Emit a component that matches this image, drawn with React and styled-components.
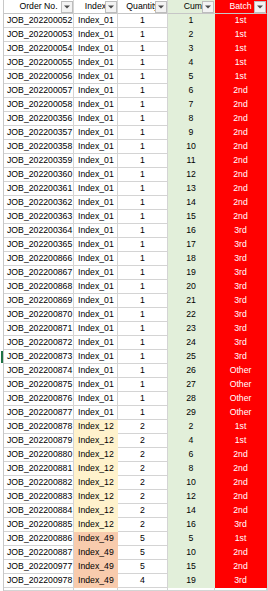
import React from "react";
import styled, { createGlobalStyle } from "styled-components";

const GRID = "#d4d4d4";

const GlobalStyle = createGlobalStyle`
  html, body { margin: 0; padding: 0; background: #ffffff; }
  body { font-family: "Liberation Sans", Arial, sans-serif; }
`;

const Sheet = styled.div`
  width: 268px;
  height: 591px;
  overflow: hidden;
  background: #ffffff;
  display: flex;
  flex-direction: column;
`;

const Row = styled.div`
  display: flex;
  flex: none;
  height: ${(p) => (p.$h ? p.$h : 14)}px;
  box-sizing: border-box;
  border-right: 1px solid ${GRID};
  width: 268px;
`;

const Gutter = styled.div`
  flex: none;
  width: 4px;
  box-sizing: border-box;
  border-right: 1px solid #c8c8c8;
  background: ${(p) =>
    p.$selected
      ? "linear-gradient(to right, transparent 1px, #217346 1px, #217346 3px, transparent 3px)"
      : "transparent"};
  background-clip: content-box;
  padding: ${(p) => (p.$selected ? "1px 0" : "0")};
`;

const Cell = styled.div`
  flex: none;
  position: relative;
  width: ${(p) => p.$w}px;
  box-sizing: border-box;
  background: ${(p) => p.$bg || "#ffffff"};
  border-right: 1px solid ${(p) => p.$bg || GRID};
  border-bottom: 1px solid ${(p) => p.$bg || GRID};
  color: ${(p) => p.$color || "#000000"};
  font-size: 8.7px;
  line-height: 13px;
  text-align: ${(p) => p.$align || "left"};
  padding: 0 ${(p) => p.$padR || 0}px 0 ${(p) => p.$padL || 0}px;
  white-space: nowrap;
  overflow: hidden;
`;

const HeadCell = styled(Cell)`
  border-bottom: 1px solid #c6c6c6;
`;

const Label = styled.span`
  display: block;
  overflow: hidden;
`;

const FilterButton = styled.div`
  position: absolute;
  right: 0;
  top: 1px;
  width: 12px;
  height: 12px;
  box-sizing: border-box;
  background: #f3f3f3;
  border: 1px solid #bdbdbd;
  display: flex;
  align-items: center;
  justify-content: center;
`;

const Caret = () => (
  <svg width="6" height="4" viewBox="0 0 6 4">
    <polygon points="0,0.5 6,0.5 3,3.5" fill="#4a4a4a" />
  </svg>
);

const COLS = [
  { key: "order", w: 70, label: "Order No.", align: "left", padL: 3 },
  { key: "index", w: 44, label: "Index", align: "left", padL: 4 },
  { key: "qty", w: 50, label: "Quantity", align: "center" },
  { key: "cum", w: 47, label: "Cum", align: "center", bg: "#e2efda", headAlign: "right", headPadR: 12 },
  { key: "batch", w: 52, label: "Batch", align: "center", bg: "#ff0000", color: "#ffffff" },
];

const INDEX_BG = {
  Index_01: null,
  Index_12: "#fff2cc",
  Index_49: "#f8cbad",
};

const orders = [
  52, 53, 54, 55, 56, 57, 58, 356, 357, 358, 359, 360, 361, 362, 363, 364, 365,
  866, 867, 868, 869, 870, 871, 872, 873, 874, 875, 876, 877, 878, 879, 880, 881,
  882, 883, 884, 885, 886, 887, 977, 978,
];

const batchFor01 = (c) => (c <= 5 ? "1st" : c <= 15 ? "2nd" : c <= 25 ? "3rd" : "Other");

const rows = orders.map((n, i) => {
  const order = `JOB_202200${String(n).padStart(3, "0")}`;
  if (i < 29) {
    return { order, index: "Index_01", qty: 1, cum: i + 1, batch: batchFor01(i + 1) };
  }
  if (i < 37) {
    const k = i - 28;
    const cum = k * 2;
    const batch = cum <= 4 ? "1st" : cum <= 14 ? "2nd" : "3rd";
    return { order, index: "Index_12", qty: 2, cum, batch };
  }
  const tail = [
    { qty: 5, cum: 5, batch: "1st" },
    { qty: 5, cum: 10, batch: "2nd" },
    { qty: 5, cum: 15, batch: "2nd" },
    { qty: 4, cum: 19, batch: "3rd" },
  ][i - 37];
  return { order, index: "Index_49", ...tail };
});

const SELECTED_ROW = 24;

export default function App() {
  return (
    <>
      <GlobalStyle />
      <Sheet>
        <Row>
          <Gutter />
          {COLS.map((c) => (
            <HeadCell
              key={c.key}
              $w={c.w}
              $bg={c.bg}
              $color={c.color}
              $align={c.headAlign || "center"}
              $padR={c.headPadR || 0}
            >
              <Label>{c.label}</Label>
              <FilterButton>
                <Caret />
              </FilterButton>
            </HeadCell>
          ))}
        </Row>
        {rows.map((r, i) => (
          <Row key={r.order}>
            <Gutter $selected={i === SELECTED_ROW} />
            {COLS.map((c) => (
              <Cell
                key={c.key}
                $w={c.w}
                $align={c.align}
                $padL={c.padL}
                $bg={c.key === "index" ? INDEX_BG[r.index] : c.bg}
                $color={c.color}
              >
                {r[c.key]}
              </Cell>
            ))}
          </Row>
        ))}
        <Row $h={3}>
          <Gutter />
          {COLS.map((c) => (
            <Cell key={c.key} $w={c.w} />
          ))}
        </Row>
      </Sheet>
    </>
  );
}
